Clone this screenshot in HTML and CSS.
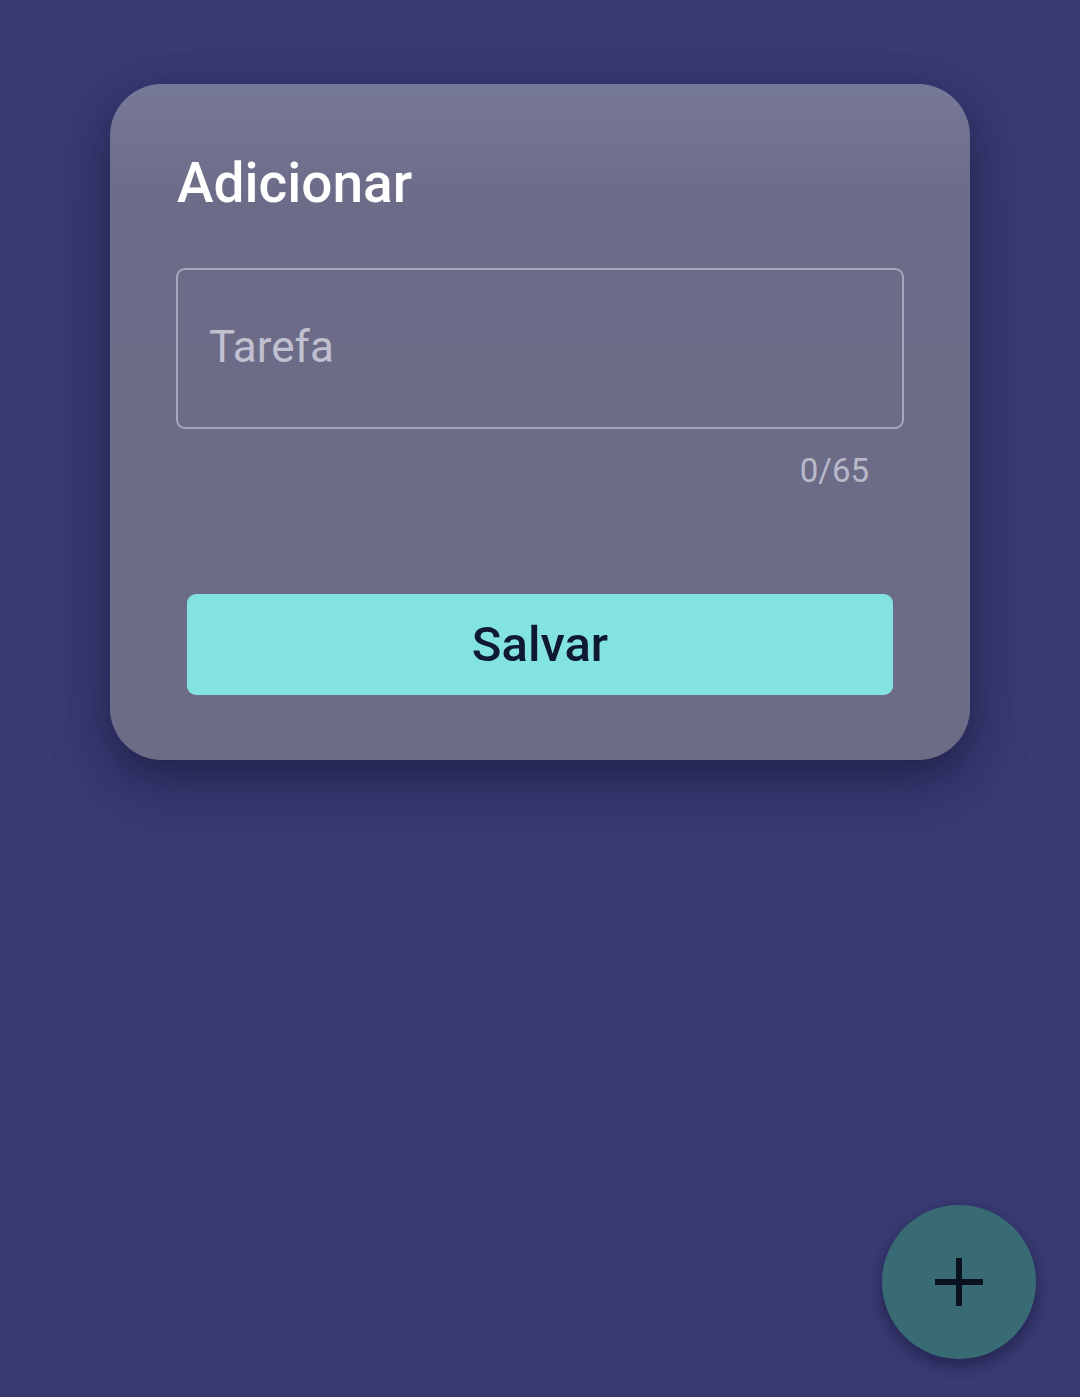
FILE: index.html
```html
<!DOCTYPE html>
<html lang="pt">
<head>
<meta charset="utf-8">
<title>Adicionar</title>
<link rel="stylesheet" href="styles.css">
</head>
<body>
<main class="screen">
  <section class="card">
    <h1 class="title">Adicionar</h1>
    <div class="field">
      <div class="input"><span class="placeholder">Tarefa</span></div>
      <div class="counter">0/65</div>
    </div>
    <button class="save">Salvar</button>
  </section>
</main>
<button class="fab" aria-label="Adicionar">
  <svg width="52" height="52" viewBox="0 0 52 52"><path d="M26 2v48M2 26h48" stroke="#0a1220" stroke-width="6" fill="none"/></svg>
</button>
</body>
</html>
```
FILE: styles.css
```css
html, body {
  margin: 0;
  padding: 0;
}
body {
  background: #3a3b73;
  font-family: Roboto, "Noto Sans", sans-serif;
  width: 1080px;
  height: 1397px;
  overflow: hidden;
}
.screen {
  padding: 84px 110px 0 110px;
}
.card {
  box-sizing: border-box;
  height: 676px;
  border-radius: 52px;
  background: linear-gradient(180deg, #767898 0px, #6c6c88 120px, #6c6c87 100%);
  box-shadow: 0 30px 60px rgba(15, 15, 45, 0.28), 0 10px 70px rgba(15, 15, 45, 0.2), 0 12px 18px rgba(15, 15, 45, 0.18);
  padding: 0 66px;
  display: flex;
  flex-direction: column;
}
.title {
  margin: 0;
  padding-top: 65px;
  padding-left: 1px;
  font-size: 55px;
  font-weight: 500;
  color: #ffffff;
  line-height: 68px;
  letter-spacing: 0;
}
.field {
  margin-top: 51px;
}
.input {
  box-sizing: border-box;
  height: 161px;
  border: 2px solid #a6a6bb;
  border-radius: 9px;
  display: flex;
  align-items: center;
  padding-left: 31px;
}
.placeholder {
  font-size: 44px;
  color: #c0c0d0;
  margin-top: -4px;
}
.counter {
  text-align: right;
  padding-right: 35px;
  font-size: 33px;
  color: #b9b9ca;
  margin-top: 21px;
  line-height: 42px;
}
.save {
  margin: 102px 11px 0 11px;
  height: 101px;
  border: none;
  border-radius: 9px;
  background: #82e3e0;
  color: #0f1a30;
  font-family: Roboto, "Noto Sans", sans-serif;
  font-size: 49px;
  font-weight: 500;
  padding: 0;
}
.fab {
  position: absolute;
  left: 882px;
  top: 1205px;
  width: 154px;
  height: 154px;
  border-radius: 50%;
  border: none;
  background: #386b74;
  box-shadow: 0 8px 14px rgba(10, 10, 40, 0.3), 0 3px 20px rgba(10, 10, 40, 0.18);
  display: flex;
  align-items: center;
  justify-content: center;
  padding: 0;
}
```
